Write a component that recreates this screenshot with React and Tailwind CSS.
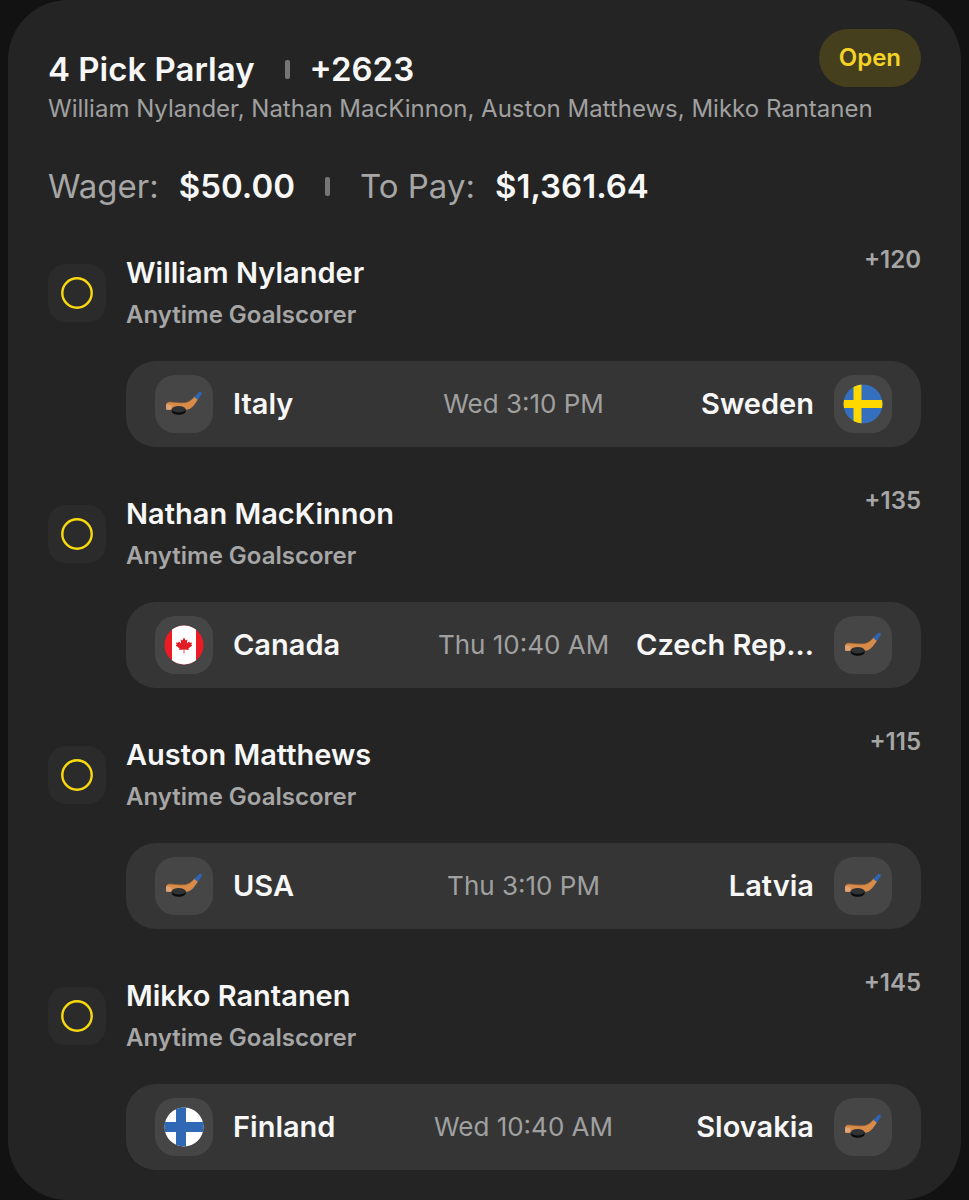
import clsx from "clsx";

const LEGS = [
    {
        player: "William Nylander",
        market: "Anytime Goalscorer",
        odds: "+120",
        time: "Wed 3:10 PM",
        home: { name: "Italy" },
        away: { name: "Sweden", flag: "sweden" },
    },
    {
        player: "Nathan MacKinnon",
        market: "Anytime Goalscorer",
        odds: "+135",
        time: "Thu 10:40 AM",
        home: { name: "Canada", flag: "canada" },
        away: { name: "Czech Rep..." },
    },
    {
        player: "Auston Matthews",
        market: "Anytime Goalscorer",
        odds: "+115",
        time: "Thu 3:10 PM",
        home: { name: "USA" },
        away: { name: "Latvia" },
    },
    {
        player: "Mikko Rantanen",
        market: "Anytime Goalscorer",
        odds: "+145",
        time: "Wed 10:40 AM",
        home: { name: "Finland", flag: "finland" },
        away: { name: "Slovakia" },
    },
];

function HockeyIcon() {
    return (
        <svg viewBox="0 0 40 40" className="size-10" aria-hidden="true">
            <path
                d="M2 21.5C2.2 19.2 3.2 18 5.2 18C10 17.8 14.5 19.2 19.5 18.8C24 18.4 27.2 16.6 30.6 12.4L34 15.4C31.2 19.4 28.4 24 24.6 25.2C20.5 26.4 14 25 9.5 25.8L2.6 25.8C2 24.6 1.9 23 2 21.5Z"
                fill="#d98c4a"
            />
            <path
                d="M2.4 19.8C2.8 18.6 3.6 18 5.2 18C10 17.8 14.5 19.2 19.5 18.8C24 18.4 27.2 16.6 30.6 12.4"
                fill="none"
                stroke="#8f5a2e"
                strokeWidth="0.7"
            />
            <path d="M2.2 20.2L7.6 21.2L7.2 25.8L2.6 25.8C2 24.4 1.9 21.8 2.2 20.2Z" fill="#dfa477" />
            <path d="M30.2 12.9L35.6 7.8C36.6 7.2 38.4 8.6 37.9 9.8L33.8 15.7Z" fill="#2f65b5" />
            <path d="M7.8 25V27.2C7.8 31.8 21.6 31.8 21.6 27.2V25Z" fill="#0b0b0c" />
            <ellipse cx="14.7" cy="25.2" rx="6.9" ry="3.2" fill="#303234" />
        </svg>
    );
}

function Flag({ country }) {
    return (
        <svg viewBox="0 0 40 40" className="size-10 rounded-full" aria-hidden="true">
            <clipPath id={`clip-${country}`}>
                <circle cx="20" cy="20" r="19.5" />
            </clipPath>
            <g clipPath={`url(#clip-${country})`}>
                {country === "sweden" && (
                    <>
                        <rect width="40" height="40" fill="#3470bd" />
                        <path d="M10.5 0H18.5V40H10.5ZM0 16H40V24H0Z" fill="#ffd800" />
                    </>
                )}
                {country === "finland" && (
                    <>
                        <rect width="40" height="40" fill="#ffffff" />
                        <path d="M12 0H22V40H12ZM0 15H40V25H0Z" fill="#2f68b4" />
                    </>
                )}
                {country === "canada" && (
                    <>
                        <rect width="40" height="40" fill="#ed1c24" />
                        <rect x="8" width="24" height="40" fill="#ffffff" />
                        <path
                            d="M20 12.5L21.6 15.4L23.4 14.6L22.8 18.4L25.2 16.6L25.8 17.8L28 17.6L27.3 19.8L28.2 20.6L24.4 23.6L24.8 25L20.4 24.5V28.6H19.6V24.5L15.2 25L15.6 23.6L11.8 20.6L12.7 19.8L12 17.6L14.2 17.8L14.8 16.6L17.2 18.4L16.6 14.6L18.4 15.4Z"
                            fill="#e31b23"
                        />
                    </>
                )}
            </g>
        </svg>
    );
}

function Divider() {
    return <span className="h-[19px] w-[5px] shrink-0 rounded-xs bg-[#757575]" />;
}

function Team({ team, away }) {
    return (
        <div className={clsx("flex min-w-0 items-center gap-5", away && "flex-row-reverse")}>
            <div className="flex size-[58px] shrink-0 items-center justify-center rounded-[20px] bg-[#464646]">
                {team.flag ? <Flag country={team.flag} /> : <HockeyIcon />}
            </div>
            <span className="truncate text-[29px] leading-9 font-semibold text-[#f7f7f7]">{team.name}</span>
        </div>
    );
}

function Leg({ leg }) {
    return (
        <li className="flex gap-5">
            <div className="mt-[18px] flex size-[58px] shrink-0 items-center justify-center rounded-[18px] bg-[#2b2b2b]">
                <svg viewBox="0 0 32 32" className="size-8" aria-hidden="true">
                    <circle cx="16" cy="16" r="14.7" fill="none" stroke="#f8d90f" strokeWidth="2.4" />
                </svg>
            </div>
            <div className="min-w-0 flex-1">
                <div className="flex items-start justify-between">
                    <div className="pt-[9px]">
                        <h2 className="text-[29px] leading-9 font-semibold text-[#f7f7f7]">{leg.player}</h2>
                        <p className="mt-2 text-2xl leading-8 font-semibold text-[#a6a6a6]">{leg.market}</p>
                    </div>
                    <span className="text-2xl leading-7 font-semibold text-[#a6a6a6]">{leg.odds}</span>
                </div>
                <div className="mt-[30px] grid grid-cols-[1fr_auto_1fr] items-center gap-x-5 rounded-[30px] bg-[#353535] px-[29px] py-[14px]">
                    <Team team={leg.home} />
                    <time className="text-[26px] leading-9 whitespace-nowrap text-[#a0a0a0]">{leg.time}</time>
                    <Team team={leg.away} away />
                </div>
            </div>
        </li>
    );
}

export default function App() {
    return (
        <div className="min-h-screen bg-[#121212] px-2 font-['Inter',sans-serif]">
            <main className="rounded-[60px] bg-[#242424] px-10 pt-[29px] pb-[30px]">
                <header className="flex items-start justify-between">
                    <div className="flex items-center pt-[19px] text-[33px] leading-[42px] font-semibold text-[#f7f7f7]">
                        <h1>4 Pick Parlay</h1>
                        <span className="flex items-center pr-5 pl-[30px]">
                            <Divider />
                        </span>
                        <span>+2623</span>
                    </div>
                    <span className="rounded-full bg-[#463f1e] px-5 py-[13px] text-2xl leading-8 font-semibold text-[#f5d327]">
                        Open
                    </span>
                </header>
                <p className="mt-[3px] text-2xl leading-8 text-[#a0a0a0]">
                    William Nylander, Nathan MacKinnon, Auston Matthews, Mikko Rantanen
                </p>

                <div className="mt-10 flex items-center text-[33px] leading-[42px] text-[#a6a6a6]">
                    <span>Wager:</span>
                    <span className="ml-5 font-semibold text-[#f7f7f7]">$50.00</span>
                    <span className="flex items-center px-[30px]">
                        <Divider />
                    </span>
                    <span>To Pay:</span>
                    <span className="ml-5 font-semibold text-[#f7f7f7]">$1,361.64</span>
                </div>

                <ul className="mt-[39px] flex flex-col gap-10">
                    {LEGS.map((leg) => (
                        <Leg key={leg.player} leg={leg} />
                    ))}
                </ul>
            </main>
        </div>
    );
}
